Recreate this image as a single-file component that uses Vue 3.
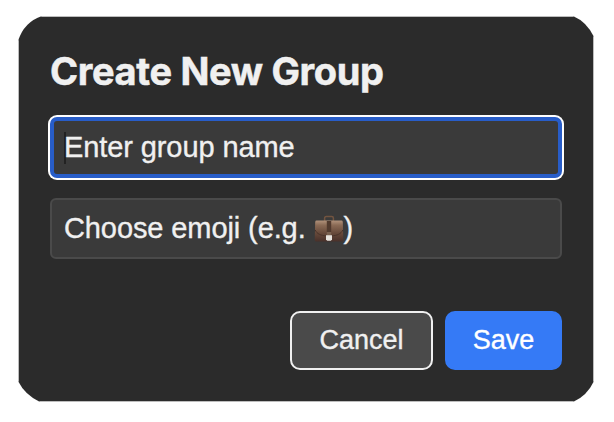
<script setup>
const title = 'Create New Group'
</script>

<template>
  <main class="page">
    <section class="dialog" role="dialog" :aria-label="title">
      <h1 class="title">{{ title }}</h1>
      <div class="field focused">
        <span class="caret"></span>
        <span class="name-text">Enter group name</span>
      </div>
      <div class="field">
        <span class="emoji-text">Choose emoji (e.g.</span>
        <svg class="briefcase" width="30" height="28" viewBox="0 0 30 28" aria-hidden="true">
          <defs>
            <linearGradient id="leather" x1="0" y1="0" x2="0" y2="1">
              <stop offset="0" stop-color="#b0917a" />
              <stop offset="0.22" stop-color="#8a6a55" />
              <stop offset="0.6" stop-color="#66493a" />
              <stop offset="1" stop-color="#48302a" />
            </linearGradient>
          </defs>
          <path d="M10.6 6V3.2Q10.6 1.5 12.3 1.5H17.7Q19.4 1.5 19.4 3.2V6" fill="none" stroke="#725440" stroke-width="1.5" />
          <path d="M2.5 5.6H27.5Q28.6 5.6 28.8 7L29.3 25Q29.3 26.6 27.8 26.6H2.2Q.7 26.6 .7 25L1.2 7Q1.4 5.6 2.5 5.6Z" fill="url(#leather)" />
          <path d="M1.2 15C3 19 7 20.6 12 20.8H18C23 20.6 27 19 28.8 15" fill="none" stroke="#49332a" stroke-width="1" />
          <path d="M12.8 6H17.2V17H12.8Z" fill="#513a2e" />
          <path d="M12.8 17H17.2V21H12.8Z" fill="#79604f" />
          <path d="M12 20.3H18V24.5L16.8 25.8H13.2L12 24.5Z" fill="#e6e2dc" />
        </svg>
        <span class="paren">)</span>
      </div>
      <div class="actions">
        <button class="button cancel" type="button"><span>Cancel</span></button>
        <button class="button save" type="button"><span>Save</span></button>
      </div>
    </section>
  </main>
</template>

<style>
body {
  background: #fff;
}
</style>

<style scoped>
.page {
  box-sizing: border-box;
  height: 422px;
  padding: 16px 20px 20px 18px;
}
.dialog {
  box-sizing: border-box;
  width: 576px;
  height: 386px;
  padding: 33px 31px 31px;
  border: 1px solid #bdbdbd;
  background: #2b2b2b;
  clip-path: path('M24 0H555Q569 6 576 21V365Q569 380 555 386H22Q7 379 0 365V25Q6 6 24 0Z');
  font-family: 'Liberation Sans', Arial, sans-serif;
  color: #f0f0f0;
}
.title {
  margin: 0 0 21px;
  height: 46px;
  font: 700 38px/42px Inter, sans-serif;
  letter-spacing: -0.35px;
  -webkit-text-stroke: 0.5px currentColor;
  white-space: nowrap;
}
.field {
  box-sizing: border-box;
  display: flex;
  align-items: center;
  height: 61px;
  margin-bottom: 20px;
  padding: 0 12px;
  border: 2px solid #4a4a4a;
  border-radius: 6px;
  background: #3a3a3a;
  font-size: 29px;
  line-height: 33px;
  letter-spacing: -0.1px;
  -webkit-text-stroke: 0.35px currentColor;
  white-space: nowrap;
}
.focused {
  padding: 0 10px;
  border: 4px solid #285dc8;
  border-radius: 7px;
  box-shadow: 0 0 0 2px #fff;
}
.caret {
  width: 2px;
  height: 32px;
  margin-right: -2px;
  background: #222;
}
.briefcase {
  flex: none;
  margin: 0 0 0 8px;
}
.actions {
  display: flex;
  justify-content: flex-end;
  gap: 12px;
  margin-top: 52px;
}
.button {
  box-sizing: border-box;
  height: 59px;
  padding: 0 0 2px;
  border: 2px solid #f0f0f0;
  border-radius: 10px;
  color: #f0f0f0;
  background: #4a4a4a;
  font: 27px/32px 'Liberation Sans', Arial, sans-serif;
  -webkit-text-stroke: 0.35px currentColor;
}
.cancel {
  width: 143px;
}
.save {
  width: 117px;
  border-color: #357af6;
  background: #357af6;
  color: #fff;
}
</style>
